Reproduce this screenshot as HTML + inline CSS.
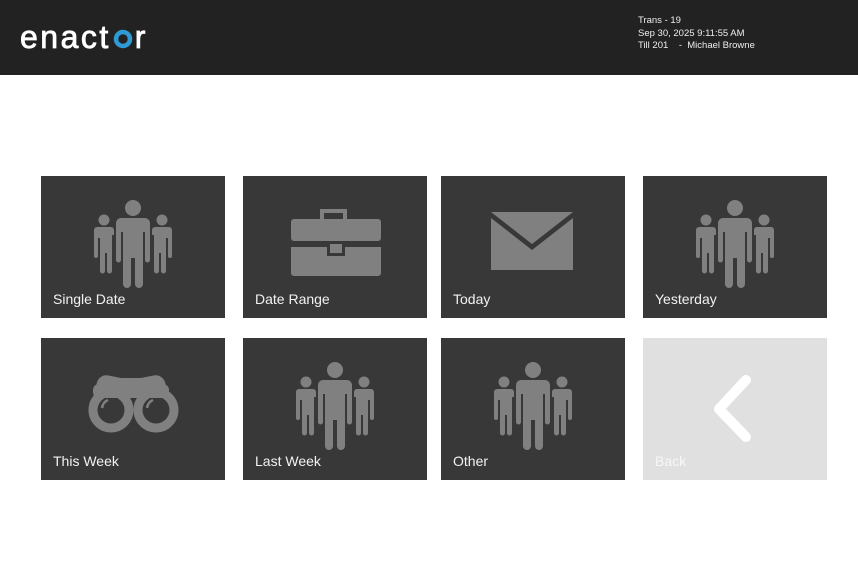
<!DOCTYPE html>
<html><head><meta charset="utf-8"><style>
*{margin:0;padding:0;box-sizing:border-box}
body{width:858px;height:567px;background:#fff;font-family:"Liberation Sans",sans-serif;position:relative;overflow:hidden}
.hdr{position:absolute;left:0;top:0;width:858px;height:75px;background:#222}
.logo{position:absolute;left:20px;top:19px;color:#fff;font-size:32px;letter-spacing:2.5px;white-space:nowrap;-webkit-text-stroke:0.8px #fff}
.logo .o{display:inline-block;width:20px;height:20px;vertical-align:-1px;margin:0 2px}
.info{position:absolute;left:638px;top:15px;color:#eee;font-size:9.5px;line-height:12.5px}
.t{position:absolute;width:184px;height:142px;background:#383838}
.t svg{position:absolute;left:0;top:0}
.t span{position:absolute;left:12px;top:115px;color:#f2f2f2;font-size:14px}
.b{background:#e0e0e0}
.b span{color:#f7f7f7}
</style></head><body>
<div class="hdr">
<div class="logo">enact<svg class="o" viewBox="0 0 20 20"><circle cx="10" cy="10" r="7" fill="none" stroke="#2f9ad3" stroke-width="4.5"/><path d="M2 8 L6 6 L5 11Z M18 12 L14 14 L15 9Z" fill="#2f9ad3"/></svg>r</div>
<div class="info">Trans - 19<br>Sep 30, 2025 9:11:55 AM<br>Till 201 &nbsp;&nbsp;&nbsp;- &nbsp;Michael Browne</div>
</div>

<svg width="0" height="0" style="position:absolute"><defs>
<g id="ppl" fill="#808080">
<circle cx="92" cy="32" r="8"/>
<path d="M80 42 H104 A5 5 0 0 1 109 47 V84 A2.5 2.5 0 0 1 104 84 V56 H102 V108 A4 4 0 0 1 94 108 V82 H90 V108 A4 4 0 0 1 82 108 V56 H80 V84 A2.5 2.5 0 0 1 75 84 V47 A5 5 0 0 1 80 42Z"/>
<circle cx="63" cy="44" r="5.5"/>
<path d="M56 51 H70 A3 3 0 0 1 73 54 V59 H71 V95 A2.5 2.5 0 0 1 66 95 V77 H64 V95 A2.5 2.5 0 0 1 59 95 V62 H57 V80 A2 2 0 0 1 53 80 V54 A3 3 0 0 1 56 51Z"/>
<circle cx="121" cy="44" r="5.5"/>
<path d="M114 51 H128 A3 3 0 0 1 131 54 V80 A2 2 0 0 1 127 80 V62 H125 V95 A2.5 2.5 0 0 1 120 95 V77 H118 V95 A2.5 2.5 0 0 1 113 95 V59 H111 V54 A3 3 0 0 1 114 51Z"/>
</g></defs></svg>

<div class="t" style="left:41px;top:176px"><svg width="184" height="142"><use href="#ppl"/></svg><span>Single Date</span></div>
<div class="t" style="left:243px;top:176px"><svg width="184" height="142"><g fill="#808080">
<path d="M77 33 H104 V43 H100 V37 H81 V43 H77Z"/>
<rect x="48" y="43" width="90" height="22" rx="3"/>
<path d="M48 71 H84 V80 H102 V71 H138 V97 A3 3 0 0 1 135 100 H51 A3 3 0 0 1 48 97Z"/>
<rect x="87" y="68" width="12" height="9"/></g></svg><span>Date Range</span></div>
<div class="t" style="left:441px;top:176px"><svg width="184" height="142"><g fill="#808080">
<path d="M50 36 H132 L91 68Z"/><path d="M50 42 L91 74 L132 42 V94 H50Z"/></g></svg><span>Today</span></div>
<div class="t" style="left:643px;top:176px"><svg width="184" height="142"><use href="#ppl"/></svg><span>Yesterday</span></div>

<div class="t" style="left:41px;top:338px"><svg width="184" height="142"><g fill="#808080">
<path d="M56 44 Q60 35 70 38 L80 40 H100 L110 38 Q120 35 124 44 L128 60 H52Z"/>
<rect x="52" y="46" width="76" height="14" rx="6"/>
<path d="M70 50 Q92 44 114 50 L114 58 Q92 52 70 58Z"/>
</g>
<g fill="none" stroke="#808080" stroke-width="9"><circle cx="70" cy="72" r="18"/><circle cx="115" cy="72" r="18"/></g>
<path d="M61 70 Q62 64 67 62" stroke="#808080" stroke-width="2.5" fill="none"/><path d="M106 70 Q107 64 112 62" stroke="#808080" stroke-width="2.5" fill="none"/>
</svg><span>This Week</span></div>
<div class="t" style="left:243px;top:338px"><svg width="184" height="142"><use href="#ppl"/></svg><span>Last Week</span></div>
<div class="t" style="left:441px;top:338px"><svg width="184" height="142"><use href="#ppl"/></svg><span>Other</span></div>
<div class="t b" style="left:643px;top:338px"><svg width="184" height="142"><path d="M103 42 L76 71 L103 99" fill="none" stroke="#fff" stroke-width="10" stroke-linecap="round" stroke-linejoin="round"/></svg><span>Back</span></div>
</body></html>
